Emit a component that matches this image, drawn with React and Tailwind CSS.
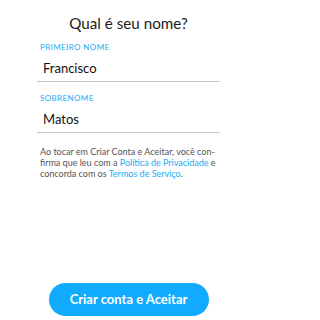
export default function App() {
  return (
    <div className="w-[257px] h-[320px] bg-white flex flex-col font-['Lato',sans-serif] overflow-hidden">
      <h1 className="mt-[13px] text-center text-[15.2px] leading-[20px] text-[#1c1c1c]">
        Qual é seu nome?
      </h1>

      <div className="mt-[9px] px-[37px]">
        <label className="block pl-[3px] text-[8px] leading-[10px] tracking-[0.4px] text-[#1eaaf1]">
          PRIMEIRO NOME
        </label>
        <div className="mt-[8px] pl-[6px] pb-[5px] border-b border-[#c6c6c6] text-[13px] leading-[16px] text-[#111]">
          Francisco
        </div>

        <label className="block mt-[11px] pl-[3px] text-[8px] leading-[10px] tracking-[0.4px] text-[#1eaaf1]">
          SOBRENOME
        </label>
        <div className="mt-[8px] pl-[6px] pb-[5px] border-b border-[#c6c6c6] text-[13px] leading-[16px] text-[#111]">
          Matos
        </div>

        <p className="mt-[13px] pl-[3px] text-[9px] leading-[11px] text-[#555]">
          Ao tocar em Criar Conta e Aceitar, você con-
          <br />
          firma que leu com a{" "}
          <span className="text-[#1eaaf1]">Política de Privacidade</span> e
          <br />
          concorda com os{" "}
          <span className="text-[#1eaaf1]">Termos de Serviço</span>.
        </p>
      </div>

      <div className="mt-auto mb-[4px] flex justify-center">
        <button className="w-[160px] h-[33px] rounded-full bg-[#10abff] text-white text-[13px] font-bold">
          Criar conta e Aceitar
        </button>
      </div>
    </div>
  );
}
